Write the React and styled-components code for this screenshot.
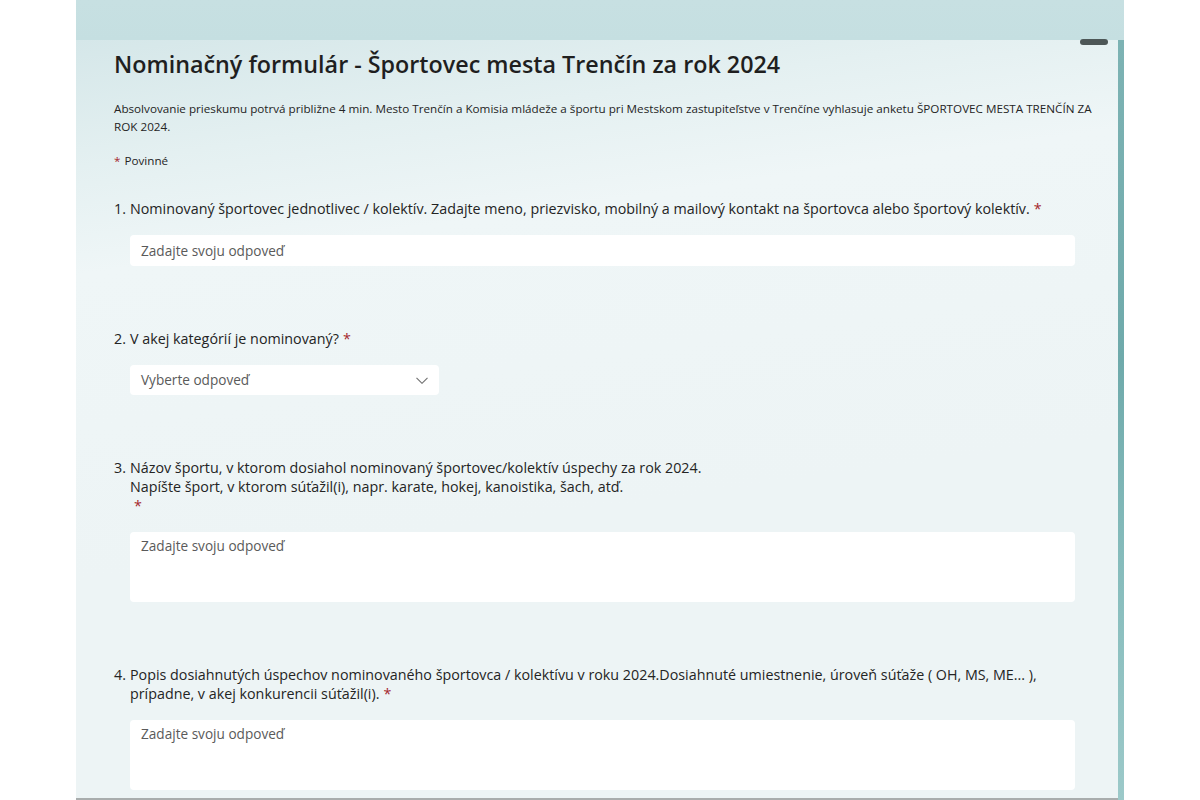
import React from "react";
import styled, { createGlobalStyle } from "styled-components";

const Global = createGlobalStyle`
  html, body { margin: 0; padding: 0; background: #ffffff; }
  body { font-family: "Open Sans", "Noto Sans", sans-serif; color: #242424; }
  * { box-sizing: border-box; }
`;

const Frame = styled.div`
  position: relative;
  margin-left: 76px;
  width: 1048px;
  height: 800px;
  overflow: hidden;
  padding-top: 40px;
  background:
    linear-gradient(180deg, #c7e0e2 0px, #c5dfe1 40px, transparent 40px),
    linear-gradient(180deg, #7fb4b5 0%, #6faaab 45%, #86bcbc 70%, #9cc9c9 100%);
`;

const ScrollThumb = styled.div`
  position: absolute;
  top: 39px;
  left: 1004px;
  width: 28px;
  height: 6px;
  border-radius: 3px;
  background: #4d5757;
`;

const Card = styled.main`
  width: 1042px;
  height: 760px;
  padding: 8px 20px 0 38px;
  background:
    linear-gradient(172deg, #d5e7e9 0%, #e4f0f1 14%, #eff6f7 26%, #edf4f5 60%, #edf4f5 100%);
  border-bottom: 2px solid #a9adad;
`;

const Title = styled.h1`
  margin: 0;
  font-size: 23.3px;
  line-height: 32px;
  font-weight: 600;
  color: #1f1f1f;
`;

const Description = styled.p`
  margin: 20px 0 0;
  font-size: 11.68px;
  line-height: 18px;
  color: #242424;
`;

const Required = styled.div`
  margin-top: 16px;
  font-size: 11.68px;
  line-height: 18px;
  color: #242424;
`;

const Star = styled.span`
  color: #a4262c;
  padding: ${(p) => (p.$inline ? "0 0 0 4px" : "0 4px 0 0")};
`;

const Questions = styled.div`
  margin-top: 29px;
  display: flex;
  flex-direction: column;
  gap: 63px;
`;

const Question = styled.section`
  display: grid;
  grid-template-columns: 16px 1fr;
`;

const Number = styled.span`
  font-size: 14.3px;
  line-height: 19px;
`;

const Body = styled.div`
  display: flex;
  flex-direction: column;
  gap: 17px;
`;

const Label = styled.div`
  font-size: 14.3px;
  line-height: 19px;
  color: #242424;
  padding-right: 30px;
`;

const StarLine = styled.div`
  padding-left: 4px;
  color: #a4262c;
`;

const Field = styled.div`
  width: ${(p) => p.$width || "945px"};
  height: ${(p) => p.$height || "31px"};
  background: #ffffff;
  border-radius: 4px;
  padding: ${(p) => (p.$multi ? "4px 11px" : "0 11px")};
  display: flex;
  align-items: ${(p) => (p.$multi ? "flex-start" : "center")};
  justify-content: space-between;
  font-size: 13.6px;
  line-height: 20px;
  color: #5a5a5a;
`;

const Chevron = () => (
  <svg width="12" height="7" viewBox="0 0 12 7" fill="none">
    <path d="M0.5 0.8l5.5 5.5 5.5-5.5" stroke="#707070" strokeWidth="1.1" />
  </svg>
);

const Req = () => <Star $inline>*</Star>;

export default function App() {
  return (
    <>
      <Global />
      <Frame>
        <Card>
          <Title>Nominačný formulár - Športovec mesta Trenčín za rok 2024</Title>
          <Description>
            Absolvovanie prieskumu potrvá približne 4 min. Mesto Trenčín a Komisia mládeže a športu pri Mestskom zastupiteľstve v Trenčíne vyhlasuje anketu ŠPORTOVEC MESTA TRENČÍN ZA ROK 2024.
          </Description>
          <Required><Star>*</Star>Povinné</Required>
          <Questions>
            <Question>
              <Number>1.</Number>
              <Body>
                <Label>
                  Nominovaný športovec jednotlivec / kolektív. Zadajte meno, priezvisko, mobilný a mailový kontakt na športovca alebo športový kolektív.<Req />
                </Label>
                <Field>Zadajte svoju odpoveď</Field>
              </Body>
            </Question>
            <Question>
              <Number>2.</Number>
              <Body>
                <Label>V akej kategórií je nominovaný?<Req /></Label>
                <Field $width="309px" $height="30px">
                  Vyberte odpoveď
                  <Chevron />
                </Field>
              </Body>
            </Question>
            <Question>
              <Number>3.</Number>
              <Body>
                <Label>
                  Názov športu, v ktorom dosiahol nominovaný športovec/kolektív úspechy za rok 2024.
                  <br />
                  Napíšte šport, v ktorom súťažil(i), napr. karate, hokej, kanoistika, šach, atď.
                  <StarLine>*</StarLine>
                </Label>
                <Field $multi $height="70px">Zadajte svoju odpoveď</Field>
              </Body>
            </Question>
            <Question>
              <Number>4.</Number>
              <Body>
                <Label>
                  Popis dosiahnutých úspechov nominovaného športovca / kolektívu v roku 2024.Dosiahnuté umiestnenie, úroveň súťaže ( OH, MS, ME... ), prípadne, v akej konkurencii súťažil(i).<Req />
                </Label>
                <Field $multi $height="70px">Zadajte svoju odpoveď</Field>
              </Body>
            </Question>
          </Questions>
        </Card>
        <ScrollThumb />
      </Frame>
    </>
  );
}
